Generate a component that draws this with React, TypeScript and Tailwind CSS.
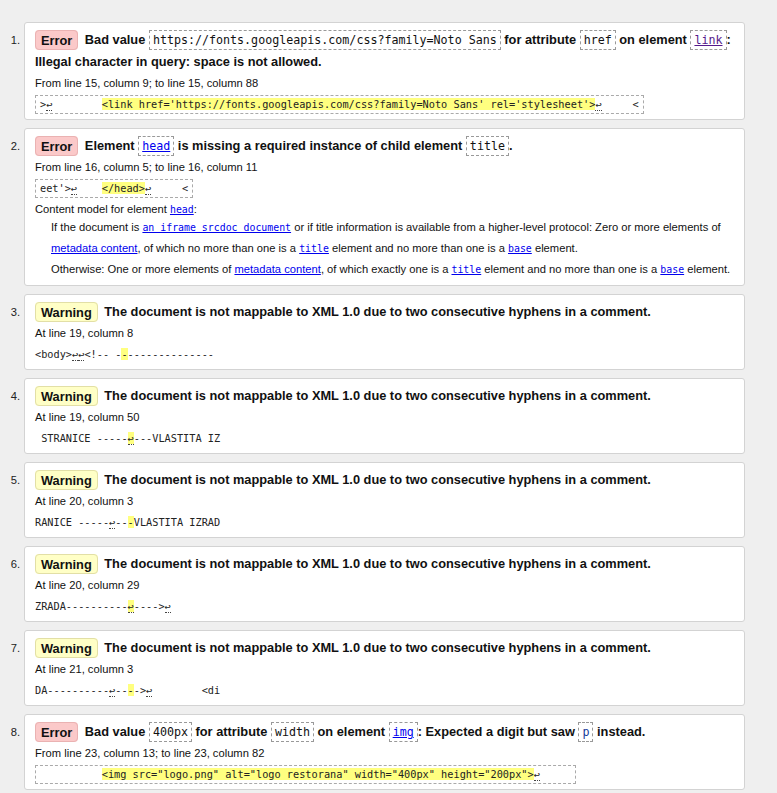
import React from "react";

const SANS = "font-['Liberation_Sans',Arial,sans-serif]";
const MONO = "font-['DejaVu_Sans_Mono',monospace]";

function Ret() {
  return <span className="border-b border-dotted border-[#444]">↩</span>;
}

function Hl({ children }: { children: React.ReactNode }) {
  return <mark className="bg-[#ffff80] text-inherit">{children}</mark>;
}

// dashed box used around values in the message line
function Val({ children, tone = "" }: { children: React.ReactNode; tone?: string }) {
  return (
    <code className={`border border-dashed border-[#999] px-[3px] py-[2px] font-normal text-[11.66px] ${MONO} ${tone}`}>
      {children}
    </code>
  );
}

function Badge({ kind }: { kind: "Error" | "Warning" }) {
  const tone =
    kind === "Error"
      ? "bg-[#fbc9c9] border-[#eab2b2]"
      : "bg-[#ffffc6] border-[#e2dfa6]";
  return <span className={`mr-[3px] rounded-[4px] border px-[5px] py-[1.5px] ${tone}`}>{kind}</span>;
}

function Title({ children }: { children: React.ReactNode }) {
  return <p className="text-[12.8px] font-bold leading-[22px] text-[#111]">{children}</p>;
}

function Loc({ children }: { children: React.ReactNode }) {
  return <p className="mt-[1px] text-[11.2px] leading-[18px] text-[#111]">{children}</p>;
}

// extract with dashed frame (errors)
function Extract({ children }: { children: React.ReactNode }) {
  return (
    <code className={`mt-[3px] block w-fit whitespace-pre border border-dashed border-[#aaa] px-[4px] text-[10.25px] leading-[17px] text-[#222] ${MONO}`}>
      {children}
    </code>
  );
}

// bare extract (warnings)
function Snip({ children }: { children: React.ReactNode }) {
  return (
    <div className={`mt-[3px] whitespace-pre text-[10.25px] leading-[19px] text-[#222] ${MONO}`}>{children}</div>
  );
}

function Card({ n, children }: { n: number; children: React.ReactNode }) {
  return (
    <li className="flex">
      <div className="w-[24px] shrink-0 pr-[4px] pt-[7px] text-right text-[11.2px] leading-[22px] text-[#222]">{n}.</div>
      <div className="w-[721px] shrink-0 rounded-[3px] border border-[#d3d3d3] bg-white px-[10px] pt-[6px] pb-[5px]">
        {children}
      </div>
    </li>
  );
}

const A = "text-[#0000ee] underline";
const AMono = `text-[#0000ee] underline text-[9.9px] ${MONO}`;
const WARN = "The document is not mappable to XML 1.0 due to two consecutive hyphens in a comment.";

export default function App() {
  return (
    <div className={`min-h-screen bg-[#efefef] pt-[22px] ${SANS}`}>
      <ol className="flex flex-col gap-[8px]">
        <Card n={1}>
          <Title>
            <Badge kind="Error" /> Bad value <Val>https://fonts.googleapis.com/css?family=Noto Sans</Val> for attribute{" "}
            <Val>href</Val> on element <Val tone="text-[#551a8b] underline">link</Val>:
            <br />
            Illegal character in query: space is not allowed.
          </Title>
          <Loc>From line 15, column 9; to line 15, column 88</Loc>
          <Extract>
            {">"}
            <Ret />
            {"        "}
            <Hl>{"<link href='https://fonts.googleapis.com/css?family=Noto Sans' rel='stylesheet'>"}</Hl>
            <Ret />
            {"     <"}
          </Extract>
        </Card>

        <Card n={2}>
          <Title>
            <Badge kind="Error" /> Element <Val tone="text-[#0000ee] underline">head</Val> is missing a required instance of
            child element <Val>title</Val>.
          </Title>
          <Loc>From line 16, column 5; to line 16, column 11</Loc>
          <Extract>
            {"eet'>"}
            <Ret />
            {"    "}
            <Hl>{"</head>"}</Hl>
            <Ret />
            {"     <"}
          </Extract>
          <p className="mt-[2px] text-[11.2px] leading-[18px] text-[#111]">
            Content model for element <span className={AMono}>head</span>:
          </p>
          <div className="mt-[-2px] pl-[16px] text-[11.2px] leading-[21px] text-[#111]">
            <div className="whitespace-nowrap">
              If the document is <span className={AMono}>an iframe srcdoc document</span> or if title information is
              available from a higher-level protocol: Zero or more elements of
            </div>
            <div className="whitespace-nowrap">
              <span className={A}>metadata content</span>, of which no more than one is a{" "}
              <span className={AMono}>title</span> element and no more than one is a <span className={AMono}>base</span>{" "}
              element.
            </div>
            <div className="whitespace-nowrap">
              Otherwise: One or more elements of <span className={A}>metadata content</span>, of which exactly one is a{" "}
              <span className={AMono}>title</span> element and no more than one is a <span className={AMono}>base</span>{" "}
              element.
            </div>
          </div>
        </Card>

        <Card n={3}>
          <Title>
            <Badge kind="Warning" /> {WARN}
          </Title>
          <Loc>At line 19, column 8</Loc>
          <Snip>
            {"<body>"}
            <Ret />
            <Ret />
            {"<!-- -"}
            <Hl>-</Hl>
            {"--------------"}
          </Snip>
        </Card>

        <Card n={4}>
          <Title>
            <Badge kind="Warning" /> {WARN}
          </Title>
          <Loc>At line 19, column 50</Loc>
          <Snip>
            {" STRANICE -----"}
            <Hl>
              <Ret />
            </Hl>
            {"---VLASTITA IZ"}
          </Snip>
        </Card>

        <Card n={5}>
          <Title>
            <Badge kind="Warning" /> {WARN}
          </Title>
          <Loc>At line 20, column 3</Loc>
          <Snip>
            {"RANICE -----"}
            <Ret />
            {"--"}
            <Hl>-</Hl>
            {"VLASTITA IZRAD"}
          </Snip>
        </Card>

        <Card n={6}>
          <Title>
            <Badge kind="Warning" /> {WARN}
          </Title>
          <Loc>At line 20, column 29</Loc>
          <Snip>
            {"ZRADA----------"}
            <Hl>
              <Ret />
            </Hl>
            {"---->"}
            <Ret />
          </Snip>
        </Card>

        <Card n={7}>
          <Title>
            <Badge kind="Warning" /> {WARN}
          </Title>
          <Loc>At line 21, column 3</Loc>
          <Snip>
            {"DA----------"}
            <Ret />
            {"--"}
            <Hl>-</Hl>
            {"->"}
            <Ret />
            {"        <di"}
          </Snip>
        </Card>

        <Card n={8}>
          <Title>
            <Badge kind="Error" /> Bad value <Val>400px</Val> for attribute <Val>width</Val> on element{" "}
            <Val tone="text-[#0000ee] underline">img</Val>: Expected a digit but saw <Val tone="text-[#15399a]">p</Val>{" "}
            instead.
          </Title>
          <Loc>From line 23, column 13; to line 23, column 82</Loc>
          <Extract>
            {"          "}
            <Hl>{'<img src="logo.png" alt="logo restorana" width="400px" height="200px">'}</Hl>
            <Ret />
            {"     "}
          </Extract>
        </Card>
      </ol>
    </div>
  );
}
